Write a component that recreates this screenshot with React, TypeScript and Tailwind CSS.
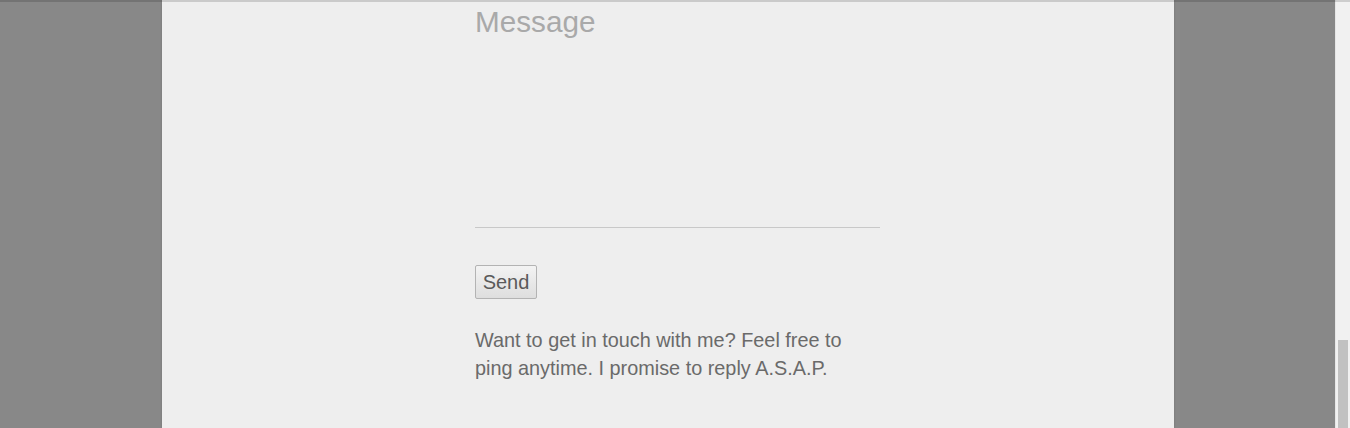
export default function App() {
  return (
    <div className="relative flex h-[428px] w-[1350px] overflow-hidden bg-[#888888] font-['Liberation_Sans',Arial,sans-serif]">
      <div className="pointer-events-none absolute inset-x-0 top-0 h-[2px] bg-black/15" />

      <div className="flex flex-1">
        <div className="ml-[162px] w-[1012px] bg-[#eeeeee] shadow-[0_0_2px_rgba(0,0,0,0.15)]">
          <div className="ml-[313px] flex w-[405px] flex-col">
            <div className="h-[228px] border-b border-[#c8c8c8] pt-[4px]">
              <p className="text-[29.7px] leading-[36px] text-[#a9a9a9]">Message</p>
            </div>

            <button className="mt-[37px] h-[34px] w-[62px] self-start rounded-[2px] border border-[#b3b3b3] bg-gradient-to-b from-[#f3f3f3] to-[#dedede] text-[20px] leading-none text-[#5a5a5a]">
              Send
            </button>

            <p className="mt-[27px] w-[380px] text-[19.85px] leading-[28px] text-[#6a6a6a]">
              Want to get in touch with me? Feel free to ping anytime. I promise to reply A.S.A.P.
            </p>
          </div>
        </div>
      </div>

      {/* browser scrollbar */}
      <div className="flex w-[15px] flex-col border-l border-[#e6e6e6] bg-[#f1f1f1] px-[2px]">
        <div className="mt-[340px] flex-1 bg-[#c1c1c1]" />
      </div>
    </div>
  );
}
